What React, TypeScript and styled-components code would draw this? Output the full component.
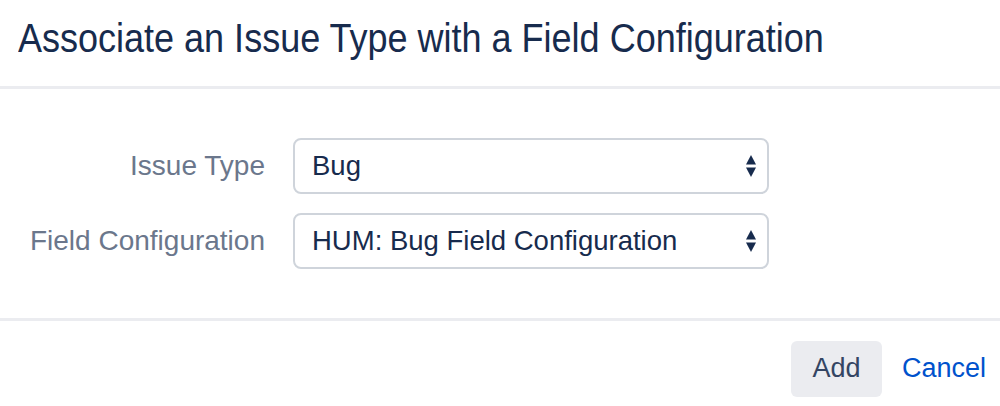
import React from "react";
import styled, { createGlobalStyle } from "styled-components";

const Global = createGlobalStyle`
  html, body { margin: 0; padding: 0; background: #fff; }
  body { font-family: "Liberation Sans", Arial, sans-serif; }
`;

const Dialog = styled.div`
  width: 1000px;
  height: 406px;
  background: #fff;
  display: flex;
  flex-direction: column;
  overflow: hidden;
`;

const Header = styled.div`
  height: 89px;
  box-sizing: border-box;
  padding: 14px 0 0 18px;
  border-bottom: 3px solid #ebecf0;
`;

const Title = styled.h1`
  margin: 0;
  font-family: "Liberation Sans", Arial, sans-serif;
  font-weight: 400;
  font-size: 40px;
  line-height: 48px;
  color: #172b4d;
  transform: scaleX(0.9);
  transform-origin: left center;
  white-space: nowrap;
`;

const Body = styled.div`
  height: 232px;
  box-sizing: border-box;
  padding-top: 49px;
  display: flex;
  flex-direction: column;
  gap: 19px;
  border-bottom: 3px solid #ebecf0;
`;

const Row = styled.div`
  display: flex;
  align-items: center;
`;

const Label = styled.label`
  width: 265px;
  text-align: right;
  font-size: 28px;
  color: #6b778c;
  padding-right: 28px;
  box-sizing: content-box;
`;

const Select = styled.div`
  width: 476px;
  height: 56px;
  box-sizing: border-box;
  border: 2px solid #cfd4db;
  border-radius: 8px;
  display: flex;
  align-items: center;
  justify-content: space-between;
  padding: 0 10px 0 17px;
  font-size: 27.5px;
  color: #172b4d;
`;

const Arrows = styled.svg`
  width: 12px;
  height: 24px;
`;

const Footer = styled.div`
  flex: 1;
  display: flex;
  justify-content: flex-end;
  align-items: center;
  padding: 10px 14px 0 0;
  gap: 20px;
`;

const Button = styled.button`
  width: 91px;
  height: 56px;
  border: none;
  border-radius: 6px;
  background: #ebecf0;
  color: #344563;
  font-family: "Liberation Sans", Arial, sans-serif;
  font-size: 27px;
  padding: 0;
`;

const LinkButton = styled.a`
  color: #0052cc;
  font-size: 27px;
  text-decoration: none;
`;

const SelectArrows = () => (
  <Arrows viewBox="0 0 12 24">
    <path d="M1 10.5 L6 1 L11 10.5 Z" fill="#172b4d" />
    <path d="M1 13.5 L6 23 L11 13.5 Z" fill="#172b4d" />
  </Arrows>
);

export default function App() {
  return (
    <>
      <Global />
      <Dialog>
        <Header>
          <Title>Associate an Issue Type with a Field Configuration</Title>
        </Header>
        <Body>
          <Row>
            <Label>Issue Type</Label>
            <Select>
              <span>Bug</span>
              <SelectArrows />
            </Select>
          </Row>
          <Row>
            <Label>Field Configuration</Label>
            <Select>
              <span>HUM: Bug Field Configuration</span>
              <SelectArrows />
            </Select>
          </Row>
        </Body>
        <Footer>
          <Button>Add</Button>
          <LinkButton href="#">Cancel</LinkButton>
        </Footer>
      </Dialog>
    </>
  );
}
